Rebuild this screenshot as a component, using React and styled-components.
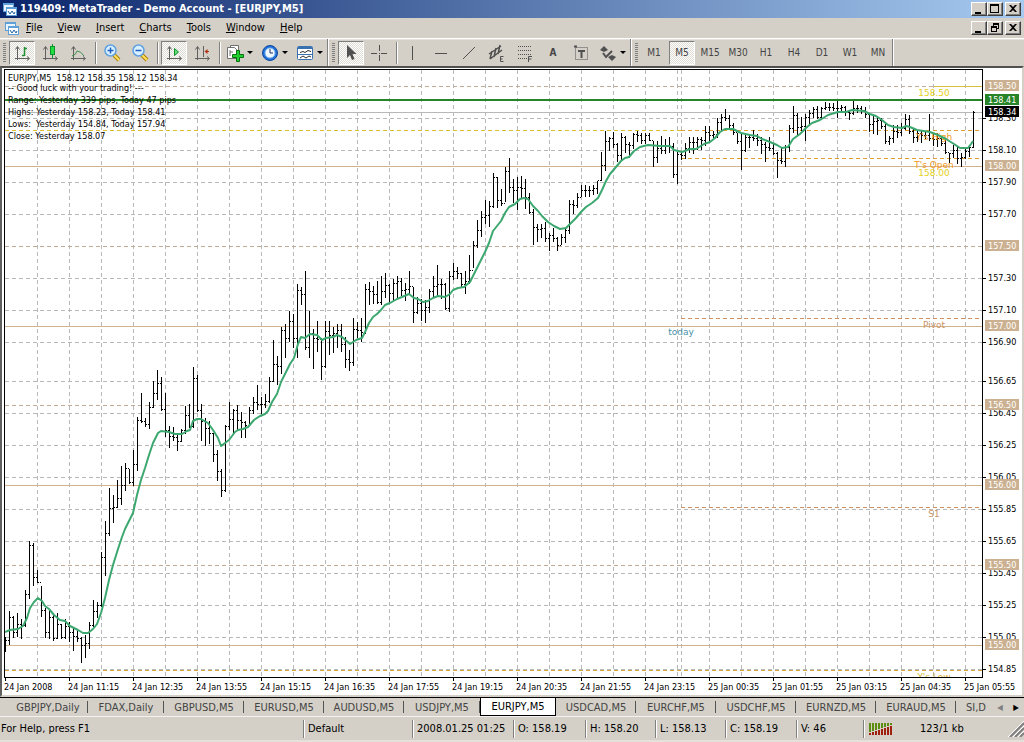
import React from "react";
import styled, { createGlobalStyle } from "styled-components";

const GlobalStyle = createGlobalStyle`
  * {
    box-sizing: border-box;
  }
  body {
    margin: 0;
    background: #d4d0c8;
    font-family: "DejaVu Sans Condensed", "DejaVu Sans", sans-serif;
    font-size: 11px;
    color: #000;
  }
  button {
    font: inherit;
    color: inherit;
    padding: 0;
    border: 0;
    background: none;
  }
`;

const Window = styled("div")`
  display: flex;
  flex-direction: column;
  min-height: 100vh;
  overflow: hidden;
`;

const TitleBar = styled("header")`
  display: flex;
  align-items: center;
  height: 18px;
  padding: 0 3px 0 2px;
  background: linear-gradient(to right, #0a246a, #a6caf0);
  color: #fff;
`;

const Title = styled("h1")`
  flex: 1;
  margin: 0 0 0 3px;
  font-size: 11px;
  line-height: 18px;
  white-space: nowrap;
`;

const MenuBar = styled("nav")`
  display: flex;
  align-items: center;
  height: 20px;
  padding: 0 3px 0 4px;
`;

const MenuItems = styled("div")`
  flex: 1;
  display: flex;
  gap: 15px;
  margin-left: 7px;
`;

const MenuItem = styled("button")`
  line-height: 18px;
  &::first-letter {
    text-decoration: underline;
  }
`;

const WindowButtons = styled("div")`
  display: flex;
`;

const WindowButton = styled("button")`
  display: flex;
  width: 16px;
  height: 14px;
  margin-left: ${(props) => (props.$apart ? "2px" : "0")};
  background: #d4d0c8;
  border: 1px solid;
  border-color: #fff #404040 #404040 #fff;
  box-shadow: inset -1px -1px 0 #808080;
`;

const Toolbar = styled("div")`
  display: flex;
  height: 28px;
  border-top: 1px solid #fff;
  box-shadow: inset 0 1px 0 #e4e1da;
`;

const ToolGroup = styled("div")`
  display: flex;
  align-items: center;
  padding-left: 3px;
  border-right: 1px solid #808080;
  box-shadow: 1px 0 0 #fff;
  margin-right: 1px;
`;

const Grip = styled("div")`
  width: 3px;
  height: 20px;
  margin-right: 2px;
  background: repeating-linear-gradient(to bottom, #808080 0 1px, #d4d0c8 1px 2px);
`;

const ToolButton = styled("button")`
  display: flex;
  align-items: center;
  justify-content: center;
  flex: none;
  width: ${(props) => (props.$menu ? "33px" : "26px")};
  height: 24px;
  margin: 0 1px;
  font-size: 10px;
  color: #444;
  ${(props) =>
    props.$pressed &&
    `
    background: repeating-conic-gradient(#fff 0 25%, #dedbd4 0 50%) 0 0 / 2px 2px;
    border: 1px solid;
    border-color: #808080 #fff #fff #808080;
  `}
`;

const ToolSeparator = styled("div")`
  width: 6px;
  height: 22px;
  border-left: 3px solid transparent;
  background: linear-gradient(to right, #808080 1px, #fff 1px 2px, transparent 2px) no-repeat;
  background-clip: padding-box;
`;

const ChartFrame = styled("main")`
  border: 2px solid;
  border-color: #505050 #d4d0c8 #d4d0c8 #606060;
  background: #fff;
`;

const Chart = styled("svg")`
  display: block;
  width: 100%;
  height: auto;
  font-size: 9px;
`;

const ChartTabs = styled("div")`
  display: flex;
  height: 20px;
  padding-left: 8px;
  border-top: 1px solid #000;
  border-bottom: 1px solid #f4f2ee;
  overflow: hidden;
`;

const ChartTab = styled("button")`
  position: relative;
  flex: none;
  width: ${(props) => (props.$narrow ? "76px" : "80px")};
  height: 18px;
  line-height: 17px;
  color: #444;
  text-align: center;
  white-space: nowrap;
  &::after {
    content: "";
    position: absolute;
    right: 0;
    top: 3px;
    height: 12px;
    border-right: 1px solid #555;
  }
  ${(props) =>
    props.$active &&
    `
    background: #fff;
    color: #000;
    border: 1px solid #000;
    border-top: 0;
    &::after { display: none; }
  `}
`;

const LastTab = styled(ChartTab)`
  flex: 1;
  width: auto;
  padding-left: 10px;
  text-align: left;
  &::after {
    display: none;
  }
`;

const TabArrow = styled("button")`
  width: 16px;
  font-size: 8px;
  color: ${(props) => (props.$off ? "#808080" : "#000")};
`;

const StatusBar = styled("footer")`
  display: grid;
  grid-template-columns: 1fr 109px 101px 72px 70px 70px 71px 67px 161px;
  align-items: center;
  height: 25px;
  border-bottom: 2px solid #e4e1da;
`;

const StatusCell = styled("div")`
  height: 18px;
  padding-left: 4px;
  line-height: 18px;
  white-space: nowrap;
  border-left: 1px solid #808080;
  box-shadow: inset 1px 0 0 #fff;
  &:first-child {
    padding-left: 1px;
    border: 0;
    box-shadow: none;
  }
`;

const Connection = styled(StatusCell)`
  display: flex;
  align-items: center;
  gap: 26px;
  svg:last-child {
    margin-left: auto;
  }
`;

const icons = {
  bars: (
    <g stroke="#606060" fill="none">
      <path d="M4.5 3v13M2 14.5h14M2.5 5.5l2-3 2 3M14 12.5l2.5 2-2.5 2" />
      <path d="M11.5 3v9M11 4.5h3M9 11.5h2" stroke="#209030" strokeWidth="1.5" />
    </g>
  ),
  candles: (
    <g stroke="#606060" fill="none">
      <path d="M4.5 3v13M2 14.5h14M2.5 5.5l2-3 2 3M14 12.5l2.5 2-2.5 2" />
      <path d="M11.500 0v14" stroke="#109030" />
      <rect x="9.500" y="2.500" width="4" height="8" fill="#20e040" stroke="#109030" />
    </g>
  ),
  line: (
    <g stroke="#606060" fill="none">
      <path d="M4.5 3v13M2 14.5h14M2.5 5.5l2-3 2 3M14 12.5l2.5 2-2.5 2" />
      <path d="M3 12q4-1 5-5 4 0 7 5" stroke="#409050" />
    </g>
  ),
  zoomIn: (
    <g>
      <path d="M11 11l5 5" stroke="#b08000" strokeWidth="4" />
      <path d="M11 11l5 5" stroke="#ffe060" strokeWidth="2" />
      <circle cx="7.500" cy="6.500" r="5.500" fill="#d8f0ff" stroke="#60a0e0" strokeWidth="1.500" />
      <path d="M4.500 6.500h6M7.500 3.500v6" stroke="#2060c0" strokeWidth="1.500" />
    </g>
  ),
  zoomOut: (
    <g>
      <path d="M11 11l5 5" stroke="#b08000" strokeWidth="4" />
      <path d="M11 11l5 5" stroke="#ffe060" strokeWidth="2" />
      <circle cx="7.500" cy="6.500" r="5.500" fill="#d8f0ff" stroke="#60a0e0" strokeWidth="1.500" />
      <path d="M4.500 6.500h6" stroke="#2060c0" strokeWidth="1.500" />
    </g>
  ),
  autoScroll: (
    <g stroke="#606060" fill="none">
      <path d="M4.5 3v13M2 14.5h14M2.5 5.5l2-3 2 3M14 12.5l2.5 2-2.5 2" />
      <path d="M9.500 4.500v7l4-3.500z" fill="#60e070" stroke="#109030" />
    </g>
  ),
  shift: (
    <g stroke="#606060" fill="none">
      <path d="M4.5 3v13M2 14.5h14M2.5 5.5l2-3 2 3M14 12.5l2.5 2-2.5 2M10.500 2v11" />
      <path d="M16 7.500h-3" stroke="#b03010" />
      <path d="M14.500 5v5l-3-2.500z" fill="#b03010" stroke="none" />
    </g>
  ),
  indicator: (
    <g>
      <path d="M4.500 1.500h8v11h-8z" fill="#fff" stroke="#707070" />
      <path d="M1.500 3.500h7l2 2v9h-9z" fill="#fff" stroke="#707070" />
      <path d="M4 6v6M4 8h3" stroke="#707070" fill="none" />
      <path d="M6.500 10.500h4v-4h3v4h4v3h-4v4h-3v-4h-4z" fill="#20d030" stroke="#087010" />
    </g>
  ),
  clock: (
    <g>
      <circle cx="9" cy="9" r="7.500" fill="#2070d8" stroke="#1048a0" />
      <circle cx="9" cy="9" r="5" fill="#f0f8ff" stroke="#80b8f0" />
      <path d="M9 5v4h3" fill="none" stroke="#203060" />
    </g>
  ),
  template: (
    <g>
      <rect x="1.500" y="2.500" width="15" height="13" rx="1" fill="#fff" stroke="#3870b0" />
      <path d="M2 4h14" stroke="#3870b0" strokeWidth="2" />
      <path d="M2 10.500h14" stroke="#3870b0" />
      <path d="M4 8.500l3-1 2 1 3-2 3 1M4 14l3-2 3 2 3-2 2 1" fill="none" stroke="#303030" />
    </g>
  ),
  cursor: <path d="M5 1v13l3-3 2 5 2.500-1-2-5h4z" fill="#505050" />,
  cross: <path d="M9.500 1v6M9.500 11v6M1 9.500h6M11 9.500h6M9 9.500h1" stroke="#505050" />,
  vertical: <path d="M8.500 2v14" stroke="#505050" />,
  horizontal: <path d="M3 9.500h12" stroke="#505050" />,
  trend: <path d="M3 15L15 3" stroke="#505050" />,
  channel: (
    <g stroke="#505050">
      <path d="M1 10L13 2M2 15L14 6M4 7l-2 8M8 4l-2 9M12 1l-2 9" fill="none" strokeWidth="1.500" />
      <path d="M15.500 12.500h-3v5h3M12.500 15h2" fill="none" />
    </g>
  ),
  fibo: (
    <g stroke="#505050" fill="none">
      <path d="M2 2.500h14M2 6.500h14M2 10.500h14M2 14.500h9" strokeDasharray="1 1" />
      <path d="M16 12.500h-3.500V18M12.500 15h3" />
    </g>
  ),
  label: (
    <g stroke="#505050" fill="none">
      <rect x="3.500" y="3.500" width="12" height="12" strokeDasharray="1 1" />
      <path d="M6 7h7M9.500 7v7M2 2.500h3" strokeWidth="2" />
    </g>
  ),
  arrows: (
    <g fill="#505050">
      <path d="M5 2l4 4-4 2-4-2zM13 17l-4-4 4-2 4 2z" />
      <path d="M4 9l3 4 6-6" fill="none" stroke="#505050" strokeWidth="2" />
    </g>
  ),
};

const Icon = ({ name }) => (
  <svg width="18" height="18" viewBox="0 0 18 18" aria-hidden="true" overflow="visible">
    {icons[name]}
  </svg>
);

const MenuMark = () => (
  <svg width="9" height="5" viewBox="0 0 9 5" aria-hidden="true">
    <path d="M3 1h6L6 4z" fill="#000" />
  </svg>
);

const AppIcon = () => (
  <svg width="15" height="15" viewBox="0 0 15 15" aria-hidden="true">
    <rect x="1.500" y="1.500" width="10" height="8" fill="#e8f4ff" stroke="#60a0d8" />
    <path d="M2 2.500h9" stroke="#60a0d8" />
    <rect x="4.500" y="5.500" width="10" height="8" fill="#fff" stroke="#60a0d8" />
    <path d="M5 6.500h9" stroke="#60a0d8" />
    <path d="M6 9l2 3 2-3 2 3 1-2" fill="none" stroke="#2060a0" />
  </svg>
);

const controls = {
  minimize: "M3 9h6v2H3z",
  maximize: "M2 1h9v9H2zM3 3v6h7V3z",
  restore: "M5 1h6v6H9v3H3V4h2zM6 3v1h3v2h1V3zM4 6v3h4V6z",
  close: "M3 2h2l2 2 2-2h2L8 5.500 11 9H9L7 7 5 9H3l3-3.500z",
};

const Controls = ({ middle, scope }) => (
  <WindowButtons>
    {["minimize", middle, "close"].map((name) => (
      <WindowButton key={name} $apart={name === "close"} aria-label={`${name} ${scope}`}>
        <svg width="14" height="12" viewBox="0 0 14 12" aria-hidden="true">
          <path d={controls[name]} fillRule="evenodd" />
        </svg>
      </WindowButton>
    ))}
  </WindowButtons>
);

const Tool = ({ name, menu, pressed }) => (
  <ToolButton $menu={menu} $pressed={pressed} aria-label={name}>
    <Icon name={name} />
    {menu && <MenuMark />}
  </ToolButton>
);

// high, low and close of every bar, in chart units; a bar opens at the last close
const bars = [
  637,651,640, 611,644,617, 616,637,632, 613,636,624, 619,638,625, 590,626,594, 541,598,545, 543,585,577,
  570,582,582, 586,616,610, 608,637,632, 609,638,617, 613,640,638, 613,638,624, 624,638,637, 619,638,626,
  622,641,632, 628,650,636, 630,641,638, 637,662,645, 635,657,643, 622,648,625, 600,626,611, 602,617,605,
  552,606,557, 521,575,533, 488,535,508, 495,522,507, 480,507,498, 466,504,485, 463,490,468, 469,483,482,
  450,485,464, 417,470,420, 393,422,421, 418,426,424, 402,428,407, 381,407,393, 370,399,383, 377,410,409,
  393,436,430, 426,447,436, 427,440,437, 433,450,441, 429,441,430, 406,433,415, 404,427,426, 367,427,378,
  375,411,410, 404,440,421, 418,445,428, 421,443,433, 433,461,454, 450,480,471, 469,496,490, 425,491,426,
  402,429,419, 409,432,410, 405,430,420, 412,437,422, 421,437,425, 407,423,410, 397,413,402, 385,409,404,
  397,413,404, 394,407,401, 377,402,381, 340,381,364, 356,384,366, 327,373,330, 324,357,338, 311,341,321,
  314,347,338, 284,357,290, 287,304,294, 271,349,347, 311,357,333, 329,368,338, 321,351,339, 338,379,366,
  321,367,331, 321,354,335, 327,352,333, 324,347,330, 324,351,344, 337,367,359, 350,370,362, 318,365,329,
  322,337,330, 318,341,332, 284,333,289, 282,304,291, 286,303,294, 281,303,302, 276,304,291, 273,297,285,
  284,301,293, 279,300,283, 276,297,281, 278,295,290, 283,300,289, 271,294,286, 287,322,312, 297,313,303,
  299,320,310, 300,322,307, 289,312,291, 276,297,286, 265,296,284, 279,298,284, 283,309,308, 271,311,276,
  263,279,271, 267,278,273, 273,287,284, 271,293,281, 255,283,270, 241,267,245, 220,247,230, 211,236,217,
  200,223,215, 201,226,206, 173,207,177, 177,207,200, 189,205,203, 167,201,171, 158,192,187, 179,202,190,
  177,209,187, 176,197,188, 179,208,197, 193,213,212, 209,244,227, 224,241,229, 224,237,228, 222,241,238,
  233,250,235, 228,241,238, 237,250,245, 234,244,237, 228,242,230, 200,233,204, 200,213,205, 193,207,197,
  185,196,190, 185,196,190, 186,196,190, 185,194,188, 181,193,180, 152,180,165, 131,170,141, 137,150,138,
  132,147,144, 143,161,155, 133,159,137, 136,152,144, 142,157,145, 133,148,134, 131,141,135, 133,143,140,
  133,143,135, 133,140,140, 141,166,157, 141,162,148, 136,153,150, 139,153,145, 137,152,146, 143,177,174,
  152,183,154, 151,159,155, 143,158,148, 137,152,142, 137,153,142, 137,149,139, 137,149,140, 126,145,132,
  126,140,135, 131,137,134, 118,137,122, 114,131,117, 109,120,118, 115,128,125, 123,134,132, 133,143,141,
  133,169,150, 135,151,137, 134,147,137, 130,140,138, 134,145,140, 137,153,144, 142,161,147, 137,150,148,
  144,154,153, 152,177,160, 148,163,161, 145,166,147, 125,151,128, 106,132,115, 113,134,127, 117,130,126,
  114,140,117, 110,125,113, 107,117,109, 106,118,117, 107,119,108, 102,109,107, 103,110,107, 103,110,108,
  101,117,108, 105,111,107, 106,115,112, 110,119,113, 101,114,108, 105,112,108, 106,113,110, 107,117,114,
  113,131,124, 115,133,121, 117,134,120, 118,128,126, 123,143,141, 136,144,138, 125,142,131, 125,137,132,
  123,135,128, 114,129,119, 115,133,131, 129,142,137, 130,141,133, 130,142,135, 132,138,135, 114,140,138,
  133,145,139, 133,146,138, 136,145,143, 140,153,152, 153,162,153, 145,157,150, 147,163,158, 153,166,157,
  149,158,151, 146,156,147, 111,147,112,
];

const averagePoints =
  "5,632 10,630 18,629 23,626 27,618 30,608 34,602 38,598 42,601 45,606 49,609 54,615 60,620 65,621 70,626 78,630 83,633 88,633 93,629 97,624 101,613 105,598 109,580 113,565 118,549 122,537 125,529 133,513 137,495 141,480 145,468 149,455 153,443 158,433 161,431 169,432 175,434 182,434 187,431 190,430 193,421 197,419 201,419 208,423 213,430 218,438 221,446 225,443 229,440 235,432 238,430 243,429 248,427 254,420 260,416 265,414 268,411 272,402 277,394 281,382 286,372 290,364 294,358 298,344 301,337 305,338 310,334 317,335 322,340 326,338 333,337 337,335 342,337 350,344 356,340 362,338 365,332 369,323 373,317 377,314 381,310 385,305 390,303 397,299 402,297 409,294 414,298 418,299 423,302 428,301 433,298 438,296 445,297 450,294 453,290 458,288 464,287 470,282 474,274 480,262 485,252 489,243 493,231 497,226 501,221 505,213 509,207 515,204 520,199 524,198 528,199 533,206 538,211 542,216 548,222 554,226 560,229 566,228 571,223 576,218 581,212 586,207 592,203 598,198 602,190 606,181 610,174 616,167 621,161 625,158 629,157 634,151 640,147 648,145 660,146 670,146 674,150 682,152 690,149 696,149 704,144 710,142 715,138 720,132 725,129 733,129 741,133 750,135 757,136 762,139 770,142 777,145 782,148 788,147 793,139 800,134 807,127 812,123 820,120 828,115 838,112 846,112 852,110 864,111 870,114 876,116 882,120 888,125 894,127 902,128 906,126 910,127 917,130 930,132 938,135 946,139 954,144 960,148 968,148 971,144 973,141";

const prices = [
  [118, "158.30"], [150, "158.10"], [182, "157.90"], [214, "157.70"], [278, "157.30"], [310, "157.10"],
  [342, "156.90"], [381, "156.65"], [413, "156.45"], [445, "156.25"], [477, "156.05"], [509, "155.85"],
  [541, "155.65"], [573, "155.45"], [605, "155.25"], [637, "155.05"], [669, "154.85"],
];

const roundPrices = [
  [86, "158.50"], [166, "158.00"], [246, "157.50"], [326, "157.00"],
  [405, "156.50"], [485, "156.00"], [565, "155.50"], [645, "155.00"],
];

const times = [
  "24 Jan 2008", "24 Jan 11:15", "24 Jan 12:35", "24 Jan 13:55", "24 Jan 15:15", "24 Jan 16:35",
  "24 Jan 17:55", "24 Jan 19:15", "24 Jan 20:35", "24 Jan 21:55", "24 Jan 23:15", "25 Jan 00:35",
  "25 Jan 01:55", "25 Jan 03:15", "25 Jan 04:35", "25 Jan 05:55",
];

const comments = [
  [81, "EURJPY,M5  158.12 158.35 158.12 158.34"],
  [91, "-- Good luck with your trading! ---"],
  [103, "Range: Yesterday 339 pips, Today 47 pips"],
  [115, "Highs: Yesterday 158.23, Today 158.41"],
  [127, "Lows:  Yesterday 154.84, Today 157.94"],
  [139, "Close: Yesterday 158.07"],
];

const barPath = () => {
  let d = "";
  let open = bars[2];
  for (let i = 0; i < bars.length / 3; i++) {
    const x = 5 + 4 * i;
    const [high, low, close] = bars.slice(i * 3, i * 3 + 3);
    d += `M${x + 0.5} ${high}V${low + 1}M${x - 1} ${open + 0.5}h1M${x + 1} ${close + 0.5}h1`;
    open = close;
  }
  return d;
};

const PriceBadge = ({ y, color, children }) => (
  <g>
    <rect x="985" y={y - 6} width="34" height="11" fill={color} />
    <text x="988" y={y + 3} fill="#fff">{children}</text>
  </g>
);

const PriceChart = () => (
  <Chart viewBox="2 68 1020 627" role="img" aria-label="EURJPY M5 price chart">
    <defs>
      <clipPath id="plot">
        <rect x="5" y="70" width="977" height="607" />
      </clipPath>
    </defs>
    <g clipPath="url(#plot)">
      <g shapeRendering="crispEdges" fill="none">
        <g stroke="#b8b8b8" strokeDasharray="4 3">
          {Array.from({ length: 30 }, (_, i) => (
            <path key={i} d={`M${37.5 + i * 32} 70V677`} />
          ))}
          {prices.map(([y]) => (
            <path key={y} d={`M5 ${y + 0.5}H982`} />
          ))}
          <path d="M681.5 70V677" />
        </g>
        {roundPrices.map(([y], i) => (
          <path
            key={y}
            d={`M5 ${y + 0.5}H982`}
            stroke={i % 2 ? "#d2b48c" : "#c0aa98"}
            strokeDasharray={i % 2 ? undefined : "4 3"}
          />
        ))}
        <path d="M934 86.500H982" stroke="#d8c040" />
        <path d="M5 130.500H681" stroke="#dcbc30" strokeDasharray="4 3" />
        <path d="M681 130.500H982M681 158.500H982" stroke="#e0a030" strokeDasharray="4 3" />
        <path d="M681 318.500H982M681 507.500H982" stroke="#d09060" strokeDasharray="4 3" />
        <path d="M5 670.500H982" stroke="#d8a840" strokeDasharray="4 3" />
        <path d="M5 112.500H982" stroke="#b8b8b8" />
        <path d="M5 100H982" stroke="#288428" strokeWidth="2" />
      </g>
      <g fontSize="9" textAnchor="middle" fontFamily="DejaVu Sans">
        <text x="934" y="96" fill="#e4d020">158.50</text>
        <text x="934" y="176" fill="#e4d020">158.00</text>
        <text x="934" y="168" fill="#f09820">T's Open</text>
        <text x="934" y="328" fill="#c89468">Pivot</text>
        <text x="934" y="517" fill="#c89468">S1</text>
        <text x="934" y="680" fill="#dcb840">Y's Low</text>
        <text x="681" y="335" fill="#4890a8">today</text>
      </g>
      <path d={barPath()} stroke="#000" fill="none" shapeRendering="crispEdges" />
      <text x="934" y="140" fill="#f09820" textAnchor="middle" fontFamily="DejaVu Sans">Y's High</text>
      <polyline points={averagePoints} stroke="#3ca870" strokeWidth="2" fill="none" strokeLinejoin="round" />
    </g>
    <path d="M4 69.500H982.500V677.500H4.500V69" stroke="#000" fill="none" shapeRendering="crispEdges" />
    {comments.map(([y, text]) => (
      <text key={y} x="8" y={y} xmlSpace="preserve">{text}</text>
    ))}
    {prices.map(([y, text]) => (
      <g key={y}>
        <path d={`M983 ${y + 0.5}h3`} stroke="#000" shapeRendering="crispEdges" />
        <text x="988" y={y + 3}>{text}</text>
      </g>
    ))}
    {roundPrices.map(([y, text]) => (
      <PriceBadge key={y} y={y} color="#cbb191">{text}</PriceBadge>
    ))}
    <PriceBadge y={100} color="#288428">158.41</PriceBadge>
    <PriceBadge y={112} color="#000">158.34</PriceBadge>
    {times.map((time, i) => (
      <g key={time}>
        <path d={`M${5.5 + i * 64} 678v3`} stroke="#000" shapeRendering="crispEdges" />
        <text x={4 + i * 64} y="690">{time}</text>
      </g>
    ))}
  </Chart>
);

const ConnectionBars = () => (
  <svg width="26" height="12" viewBox="0 0 26 12" aria-hidden="true">
    {Array.from({ length: 8 }, (_, i) => (
      <g key={i}>
        <rect x={1 + i * 3} y="0" width="2" height={9 - i} fill="#5c8c10" />
        <rect x={1 + i * 3} y={10 - i} width="2" height={2 + i} fill="#a02010" />
      </g>
    ))}
  </svg>
);

const ResizeGrip = () => (
  <svg width="16" height="16" viewBox="0 0 16 16" aria-hidden="true">
    <path d="M2 16L16 2M7 16l9-9M12 16l4-4" stroke="#808080" strokeWidth="2" />
    <path d="M0 16L16 0M5 16L16 5M10 16l6-6" stroke="#fff" />
  </svg>
);

const tabs = [
  "GBPJPY,Daily", "FDAX,Daily", "GBPUSD,M5", "EURUSD,M5", "AUDUSD,M5", "USDJPY,M5",
  "EURJPY,M5", "USDCAD,M5", "EURCHF,M5", "USDCHF,M5", "EURNZD,M5", "EURAUD,M5",
];
const narrowTabs = ["FDAX,Daily", "USDJPY,M5", "EURJPY,M5"];

const App = () => {
  return (
    <Window>
      <GlobalStyle />
      <TitleBar>
        <AppIcon />
        <Title>119409: MetaTrader - Demo Account - [EURJPY,M5]</Title>
        <Controls middle="maximize" scope="window" />
      </TitleBar>
      <MenuBar>
        <AppIcon />
        <MenuItems>
          {["File", "View", "Insert", "Charts", "Tools", "Window", "Help"].map((item) => (
            <MenuItem key={item}>{item}</MenuItem>
          ))}
        </MenuItems>
        <Controls middle="restore" scope="chart" />
      </MenuBar>
      <Toolbar>
        <ToolGroup>
          <Grip />
          <Tool name="bars" pressed />
          <Tool name="candles" />
          <Tool name="line" />
          <ToolSeparator />
          <Tool name="zoomIn" />
          <Tool name="zoomOut" />
          <ToolSeparator />
          <Tool name="autoScroll" pressed />
          <Tool name="shift" />
          <ToolSeparator />
          <Tool name="indicator" menu />
          <Tool name="clock" menu />
          <Tool name="template" menu />
        </ToolGroup>
        <ToolGroup>
          <Grip />
          <Tool name="cursor" pressed />
          <Tool name="cross" />
          <ToolSeparator />
          <Tool name="vertical" />
          <Tool name="horizontal" />
          <Tool name="trend" />
          <Tool name="channel" />
          <Tool name="fibo" />
          <ToolButton><b>A</b></ToolButton>
          <Tool name="label" />
          <Tool name="arrows" menu />
        </ToolGroup>
        <ToolGroup>
          <Grip />
          {["M1", "M5", "M15", "M30", "H1", "H4", "D1", "W1", "MN"].map((period) => (
            <ToolButton key={period} $pressed={period === "M5"}>{period}</ToolButton>
          ))}
        </ToolGroup>
      </Toolbar>
      <ChartFrame>
        <PriceChart />
      </ChartFrame>
      <ChartTabs>
        {tabs.map((tab) => (
          <ChartTab key={tab} $active={tab === "EURJPY,M5"} $narrow={narrowTabs.includes(tab)}>
            {tab}
          </ChartTab>
        ))}
        <LastTab>SI,D</LastTab>
        <TabArrow $off aria-label="scroll left">◀</TabArrow>
        <TabArrow aria-label="scroll right">▶</TabArrow>
      </ChartTabs>
      <StatusBar>
        <StatusCell>For Help, press F1</StatusCell>
        <StatusCell>Default</StatusCell>
        <StatusCell>2008.01.25 01:25</StatusCell>
        <StatusCell>O: 158.19</StatusCell>
        <StatusCell>H: 158.20</StatusCell>
        <StatusCell>L: 158.13</StatusCell>
        <StatusCell>C: 158.19</StatusCell>
        <StatusCell>V: 46</StatusCell>
        <Connection>
          <ConnectionBars />
          <span>123/1 kb</span>
          <ResizeGrip />
        </Connection>
      </StatusBar>
    </Window>
  );
};

export default App;
